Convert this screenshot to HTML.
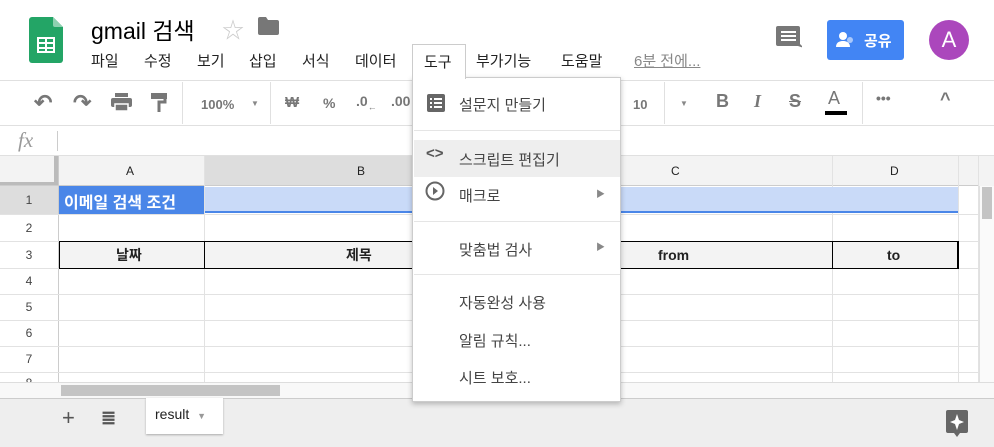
<!DOCTYPE html>
<html><head><meta charset="utf-8"><style>
*{box-sizing:border-box;margin:0;padding:0}
body{width:994px;height:447px;overflow:hidden;background:#fff;font-family:"Liberation Sans","Noto Sans CJK KR",sans-serif;position:relative;color:#222}
.a{position:absolute}
.menu span{position:absolute;top:50px;font-size:15px;color:#222}
.tb{color:#777;font-size:13px;font-weight:bold}
.hl{position:absolute;background:#e2e2e2}
.rh{position:absolute;left:0;width:58px;text-align:center;font-size:12px;color:#444}
.mi{position:absolute;left:46px;font-size:15px;color:#444}
</style></head><body>
<svg class="a" style="left:29px;top:17px" width="34" height="46" viewBox="0 0 34 46"><path d="M3 0h21l10 10v33a3 3 0 0 1-3 3H3a3 3 0 0 1-3-3V3a3 3 0 0 1 3-3z" fill="#23a566"/><path d="M24 0l10 10H26a2 2 0 0 1-2-2z" fill="#8ed1b1"/><rect x="8" y="20" width="18" height="16" fill="#fff"/><g fill="#23a566"><rect x="10" y="22" width="6" height="3"/><rect x="18" y="22" width="6" height="3"/><rect x="10" y="27" width="6" height="3"/><rect x="18" y="27" width="6" height="3"/><rect x="10" y="32" width="6" height="2"/><rect x="18" y="32" width="6" height="2"/></g></svg>
<div class="a" style="left:91px;top:12px;font-size:23px;color:#000">gmail 검색</div>
<div class="a" style="left:222px;top:13px;font-size:22px;color:#ccc">☆</div>
<svg class="a" style="left:258px;top:17px" width="21" height="18"><path d="M0 2a2 2 0 0 1 2-2h6l2 3h9a2 2 0 0 1 2 2v11a2 2 0 0 1-2 2H2a2 2 0 0 1-2-2z" fill="#777"/></svg>
<div class="menu">
<span style="left:91px">파일</span><span style="left:144px">수정</span><span style="left:197px">보기</span><span style="left:249px">삽입</span><span style="left:302px">서식</span><span style="left:355px">데이터</span><span style="left:476px">부가기능</span><span style="left:561px">도움말</span>
<span style="left:634px;color:#888;text-decoration:underline">6분 전에...</span>
</div>
<div class="a" style="left:412px;top:44px;width:54px;height:35px;border:1px solid #ccc;border-bottom:none;background:#fff;z-index:3;font-size:15px;padding:6px 0 0 11px">도구</div>
<svg class="a" style="left:776px;top:26px" width="26" height="24"><path d="M2 0h20a2 2 0 0 1 2 2v16l4 4-6-2H2a2 2 0 0 1-2-2V2a2 2 0 0 1 2-2z" fill="#777"/><g fill="#fff"><rect x="5" y="5" width="15" height="2"/><rect x="5" y="9" width="15" height="2"/><rect x="5" y="13" width="15" height="2"/></g></svg>
<div class="a" style="left:827px;top:20px;width:77px;height:40px;background:#4285f4;border-radius:3px;color:#fff;font-size:15px;font-weight:bold;padding:10px 0 0 37px">공유</div>
<svg class="a" style="left:836px;top:32px" width="20" height="16"><circle cx="7" cy="4" r="4" fill="#fff"/><path d="M0 15c0-5 4-6 7-6s7 1 7 6z" fill="#fff"/><circle cx="14" cy="8" r="3" fill="#a9c8fb"/></svg>
<div class="a" style="left:929px;top:20px;width:40px;height:40px;border-radius:50%;background:#ab47bc;color:#fff;font-size:22px;text-align:center;line-height:40px">A</div>
<div class="a" style="left:0;top:80px;width:994px;height:1px;background:#e0e0e0"></div>
<div class="a tb" style="left:34px;top:90px;font-size:22px">↶</div>
<div class="a tb" style="left:73px;top:90px;font-size:22px">↷</div>
<svg class="a" style="left:111px;top:93px" width="21" height="19"><rect x="4" y="0" width="13" height="4" fill="#777"/><rect x="0" y="5" width="21" height="9" rx="2" fill="#777"/><rect x="4" y="11" width="13" height="7" fill="#777" stroke="#fff" stroke-width="1.5"/></svg>
<svg class="a" style="left:151px;top:93px" width="17" height="20"><rect x="0" y="0" width="16" height="6" fill="#777"/><path d="M14 6v3H8v10" stroke="#777" stroke-width="3" fill="none"/></svg>
<div class="a" style="left:182px;top:82px;width:1px;height:42px;background:#e0e0e0"></div>
<div class="a tb" style="left:201px;top:97px">100%</div>
<div class="a" style="left:251px;top:99px;font-size:8px;color:#888">▼</div>
<div class="a" style="left:270px;top:82px;width:1px;height:42px;background:#e0e0e0"></div>
<div class="a tb" style="left:285px;top:94px;font-size:15px">₩</div>
<div class="a tb" style="left:323px;top:95px;font-size:14px">%</div>
<div class="a tb" style="left:356px;top:93px;font-size:14px">.0<sub style="font-size:9px">←</sub></div>
<div class="a tb" style="left:391px;top:93px;font-size:14px">.00</div>
<div class="a tb" style="left:633px;top:97px">10</div>
<div class="a" style="left:680px;top:99px;font-size:8px;color:#888">▼</div>
<div class="a" style="left:664px;top:82px;width:1px;height:42px;background:#e0e0e0"></div>
<div class="a tb" style="left:716px;top:91px;font-size:18px">B</div>
<div class="a tb" style="left:754px;top:91px;font-size:18px;font-style:italic;font-family:'Liberation Serif',serif">I</div>
<div class="a tb" style="left:789px;top:91px;font-size:18px;text-decoration:line-through">S</div>
<div class="a tb" style="left:828px;top:88px;font-size:18px;font-weight:normal">A</div>
<div class="a" style="left:825px;top:111px;width:22px;height:4px;background:#000"></div>
<div class="a" style="left:862px;top:82px;width:1px;height:42px;background:#e0e0e0"></div>
<div class="a tb" style="left:876px;top:90px;font-size:14px">•••</div>
<div class="a tb" style="left:940px;top:89px;font-size:18px">^</div>
<div class="a" style="left:0;top:125px;width:994px;height:1px;background:#e0e0e0"></div>
<div class="a" style="left:18px;top:128px;font-size:21px;font-style:italic;color:#999;font-family:'Liberation Serif',serif">fx</div>
<div class="a" style="left:57px;top:131px;width:1px;height:20px;background:#ccc"></div>
<div class="a" style="left:0;top:155px;width:994px;height:1px;background:#e0e0e0"></div>
<div class="a" style="left:0;top:156px;width:994px;height:30px;background:#f3f3f3"></div>
<div class="a" style="left:0;top:156px;width:58px;height:30px;background:#f3f3f3;border-right:4px solid #bbb;border-bottom:4px solid #bbb"></div>
<div class="a" style="left:204px;top:156px;width:316px;height:30px;background:#ddd"></div>
<div class="a" style="left:0;top:185px;width:978px;height:1px;background:#ccc"></div>
<div class="a" style="left:126px;top:164px;font-size:12px">A</div>
<div class="a" style="left:357px;top:164px;font-size:12px">B</div>
<div class="a" style="left:671px;top:164px;font-size:12px">C</div>
<div class="a" style="left:890px;top:164px;font-size:12px">D</div>
<div class="hl" style="left:58px;top:156px;width:1px;height:226px;background:#ccc"></div>
<div class="hl" style="left:204px;top:156px;width:1px;height:226px"></div>
<div class="hl" style="left:832px;top:156px;width:1px;height:226px"></div>
<div class="hl" style="left:958px;top:156px;width:1px;height:226px"></div>
<div class="hl" style="left:978px;top:156px;width:1px;height:226px"></div>
<div class="a" style="left:0;top:186px;width:58px;height:28px;background:#ddd"></div>
<div class="hl" style="left:0;top:214px;width:978px;height:1px"></div>
<div class="hl" style="left:0;top:241px;width:978px;height:1px"></div>
<div class="hl" style="left:0;top:268px;width:978px;height:1px"></div>
<div class="hl" style="left:0;top:294px;width:978px;height:1px"></div>
<div class="hl" style="left:0;top:320px;width:978px;height:1px"></div>
<div class="hl" style="left:0;top:346px;width:978px;height:1px"></div>
<div class="hl" style="left:0;top:372px;width:978px;height:1px"></div>
<div class="rh" style="top:193px">1</div><div class="rh" style="top:221px">2</div><div class="rh" style="top:248px">3</div><div class="rh" style="top:274px">4</div><div class="rh" style="top:300px">5</div><div class="rh" style="top:326px">6</div><div class="rh" style="top:352px">7</div><div class="rh" style="top:376px;height:6px;overflow:hidden">8</div>
<div class="a" style="left:59px;top:186px;width:145px;height:28px;background:#4a86e8;color:#fff;font-weight:bold;font-size:16px;padding:3px 0 0 5px">이메일 검색 조건</div>
<div class="a" style="left:205px;top:187px;width:753px;height:26px;background:#c9daf8;border-bottom:2px solid #4a86e8"></div>
<div class="a" style="left:59px;top:241px;width:900px;height:28px;background:#f3f3f3;border:1px solid #000;border-right:2px solid #000"></div>
<div class="a" style="left:204px;top:241px;width:1px;height:27px;background:#000"></div>
<div class="a" style="left:832px;top:241px;width:1px;height:27px;background:#000"></div>
<div class="a" style="left:116px;top:245px;font-weight:bold;font-size:14px">날짜</div>
<div class="a" style="left:346px;top:245px;font-weight:bold;font-size:14px">제목</div>
<div class="a" style="left:658px;top:247px;font-weight:bold;font-size:14px">from</div>
<div class="a" style="left:887px;top:247px;font-weight:bold;font-size:14px">to</div>
<div class="a" style="left:979px;top:186px;width:15px;height:196px;background:#fafafa;border-left:1px solid #e0e0e0"></div>
<div class="a" style="left:982px;top:187px;width:10px;height:32px;background:#c4c4c4"></div>
<div class="a" style="left:0;top:382px;width:994px;height:16px;background:#f8f8f8;border-top:1px solid #ddd"></div>
<div class="a" style="left:61px;top:385px;width:219px;height:11px;background:#c4c4c4"></div>
<div class="a" style="left:0;top:398px;width:994px;height:49px;background:#eee;border-top:1px solid #ccc"></div>
<div class="a" style="left:62px;top:405px;font-size:22px;color:#555">+</div>
<div class="a" style="left:101px;top:408px;font-size:18px;color:#555;font-weight:bold">≣</div>
<div class="a" style="left:146px;top:398px;width:77px;height:36px;background:#fff;box-shadow:0 1px 2px #aaa;padding:8px 0 0 9px;font-size:14px">result <span style="font-size:9px;color:#999;margin-left:4px">▼</span></div>
<svg class="a" style="left:946px;top:410px" width="22" height="27"><path d="M2 0h18a2 2 0 0 1 2 2v19a2 2 0 0 1-2 2h-6l-3 4-3-4H2a2 2 0 0 1-2-2V2a2 2 0 0 1 2-2z" fill="#666"/><path d="M11 4l2 6 5 2-5 2-2 6-2-6-5-2 5-2z" fill="#fff"/></svg>
<div class="a" style="left:412px;top:77px;width:209px;height:325px;background:#fff;border:1px solid #ccc;box-shadow:0 2px 5px rgba(0,0,0,.25);z-index:2">
<svg class="a" style="left:14px;top:16px" width="18" height="18"><rect width="18" height="18" rx="2" fill="#666"/><g fill="#fff"><rect x="3" y="4" width="2" height="2"/><rect x="7" y="4" width="8" height="2"/><rect x="3" y="8" width="2" height="2"/><rect x="7" y="8" width="8" height="2"/><rect x="3" y="12" width="2" height="2"/><rect x="7" y="12" width="8" height="2"/></g></svg>
<div class="mi" style="top:16px">설문지 만들기</div>
<div class="a" style="left:1px;top:52px;width:206px;height:1px;background:#e5e5e5"></div>
<div class="a" style="left:1px;top:62px;width:206px;height:37px;background:#eee"></div>
<div class="a" style="left:13px;top:67px;font-size:15px;font-weight:bold;color:#555">&lt;&gt;</div>
<div class="mi" style="top:71px">스크립트 편집기</div>
<svg class="a" style="left:12px;top:103px" width="20" height="20"><circle cx="10" cy="10" r="8.5" stroke="#666" stroke-width="2" fill="none"/><path d="M8 6l5 4-5 4z" fill="#666"/></svg>
<div class="mi" style="top:107px">매크로</div>
<div class="a" style="left:183px;top:109px;font-size:9px;color:#888">▶</div>
<div class="a" style="left:1px;top:143px;width:206px;height:1px;background:#e5e5e5"></div>
<div class="mi" style="top:161px">맞춤법 검사</div>
<div class="a" style="left:183px;top:162px;font-size:9px;color:#888">▶</div>
<div class="a" style="left:1px;top:196px;width:206px;height:1px;background:#e5e5e5"></div>
<div class="mi" style="top:214px">자동완성 사용</div>
<div class="mi" style="top:252px">알림 규칙...</div>
<div class="mi" style="top:289px">시트 보호...</div>
</div>
</body></html>
